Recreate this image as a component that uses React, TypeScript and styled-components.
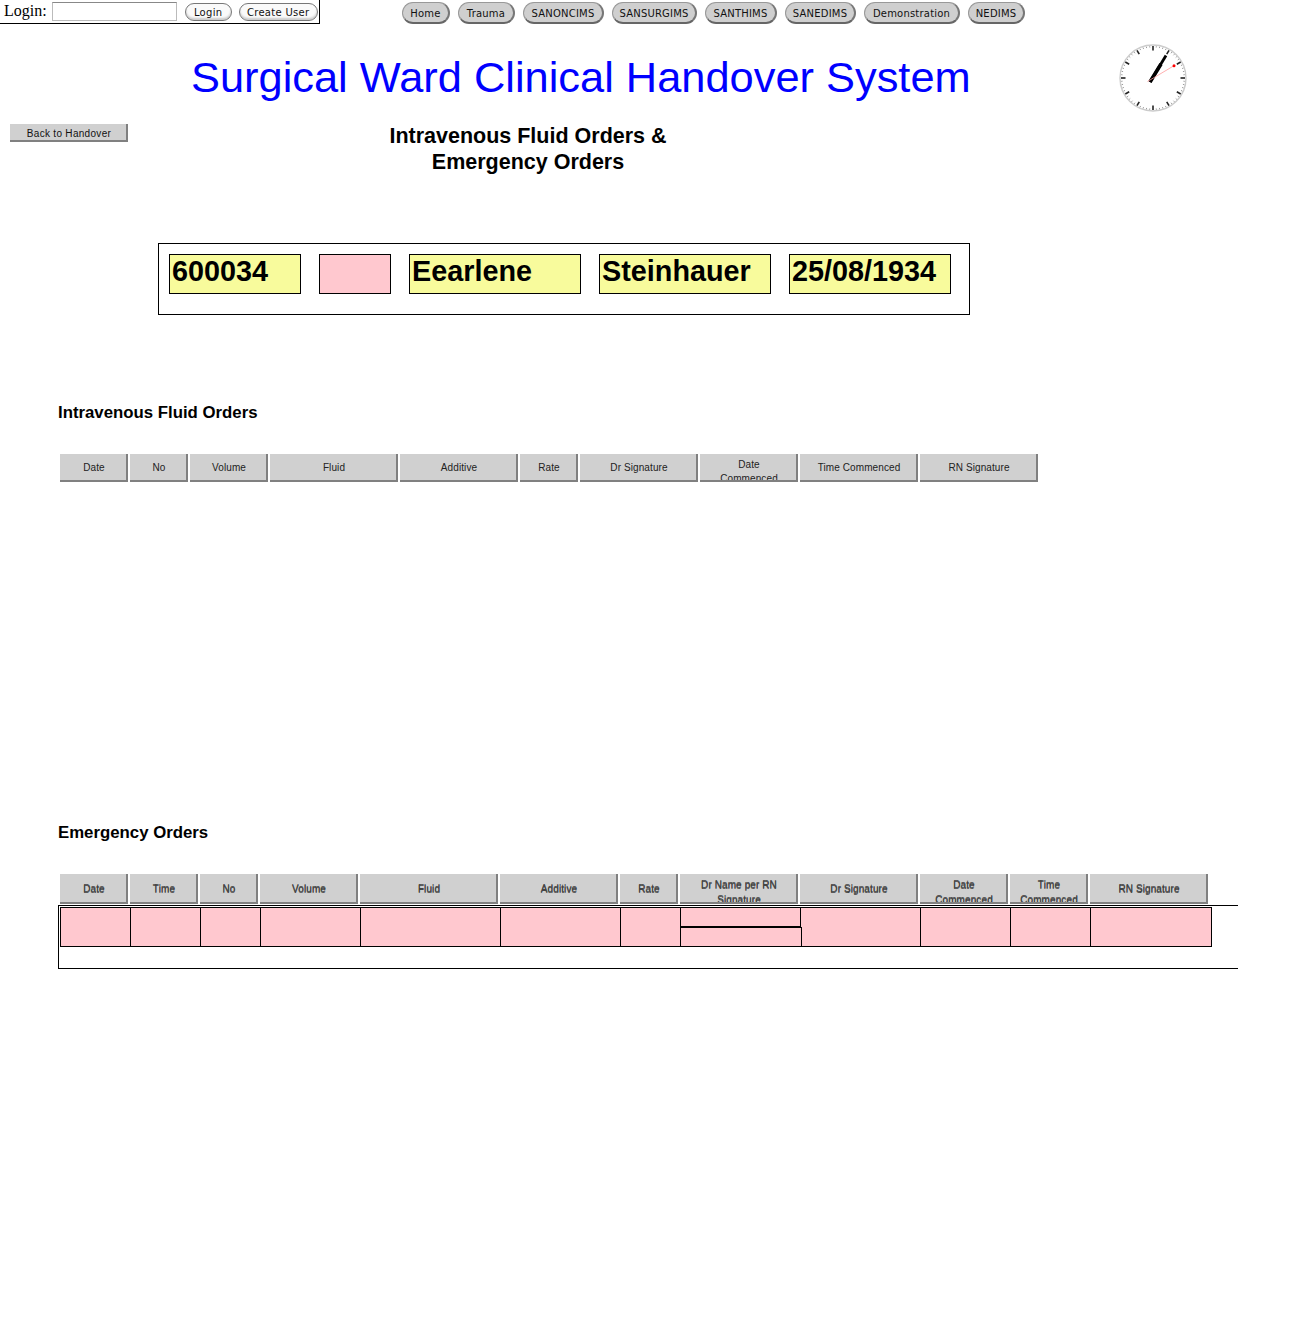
import styled, { createGlobalStyle } from "styled-components"

const GlobalStyle = createGlobalStyle`
  html, body {
    margin: 0;
    background: #fff;
    color: #000;
    font-family: "Liberation Sans", Arial, sans-serif;
  }
`

const Page = styled.div`
  width: 1308px;
  height: 1323px;
  overflow: hidden;
`

const TopBar = styled.div`
  display: flex;
  height: 24px;
`

const LoginBox = styled.form`
  box-sizing: border-box;
  display: flex;
  align-items: center;
  width: 320px;
  height: 24px;
  padding: 0 1px 1px 4px;
  border-right: 1px solid #000;
  border-bottom: 1px solid #000;
  font-family: "Liberation Serif", serif;
  font-size: 16px;
`

const LoginInput = styled.input`
  box-sizing: border-box;
  width: 125px;
  height: 19px;
  margin: 0 8px 0 5px;
  padding: 0;
  border: 1px solid #bbb;
  border-top-color: #888;
  background: #fff;
`

const PillButton = styled.button<{ $width: number }>`
  box-sizing: border-box;
  width: ${({ $width }) => $width}px;
  height: 18px;
  margin: 1px 7px 0 0;
  padding: 1px 0 0;
  border: 1px solid #777;
  border-radius: 9px;
  background: #fafafa;
  box-shadow: inset 0 -2px 2px #ccc;
  color: #111;
  font-family: "DejaVu Sans", sans-serif;
  font-size: 10px;
  letter-spacing: 0.3px;
  line-height: 15px;
  white-space: nowrap;

  &:last-child {
    margin-right: 0;
  }
`

const Nav = styled.nav`
  display: flex;
  gap: 8px;
  align-items: flex-start;
  margin: 2px 0 0 82px;
`

const NavButton = styled.button<{ $width: number }>`
  box-sizing: border-box;
  width: ${({ $width }) => $width}px;
  height: 22px;
  padding: 1px 0 0;
  border: 1px solid #999;
  border-bottom: 2px solid #666;
  border-right: 2px solid #777;
  border-radius: 11px;
  background: #cfcfcf;
  color: #111;
  font-family: "DejaVu Sans", sans-serif;
  font-size: 10px;
  letter-spacing: 0.2px;
  white-space: nowrap;
`

const TitleRow = styled.header`
  display: flex;
  align-items: center;
  height: 100px;
  padding: 0 121px 0 191px;
  box-sizing: border-box;
  justify-content: space-between;
`

const Title = styled.h1`
  margin: 6px 0 0;
  color: #0000ff;
  font-size: 43.4px;
  font-weight: 400;
  line-height: 50px;
  white-space: nowrap;
`

const ClockFace = styled.svg`
  display: block;
  width: 68px;
  height: 68px;
  margin-top: 7px;
`

const SubHeader = styled.div`
  display: flex;
  align-items: flex-start;
  height: 119px;
  padding-left: 10px;
`

const BackButton = styled.button`
  box-sizing: border-box;
  width: 118px;
  height: 18px;
  padding: 2px 0 0 2px;
  border: 0;
  border-right: 2px solid #808080;
  border-bottom: 2px solid #808080;
  background: #d0d0d0;
  color: #111;
  font-family: "Liberation Sans", sans-serif;
  font-size: 10px;
  letter-spacing: 0.3px;
`

const SubTitle = styled.h2`
  width: 300px;
  margin: -1px 0 0 250px;
  font-size: 21.5px;
  font-weight: 700;
  line-height: 26px;
  text-align: center;
`

const PatientBox = styled.section`
  box-sizing: border-box;
  display: flex;
  gap: 18px;
  width: 812px;
  height: 72px;
  margin-left: 158px;
  padding: 10px;
  border: 1px solid #000;
`

const PatientField = styled.div<{ $width: number; $blank?: boolean }>`
  box-sizing: border-box;
  width: ${({ $width }) => $width}px;
  height: 40px;
  padding-left: 2px;
  border: 1px solid #000;
  background: ${({ $blank }) => ($blank ? "#ffc8cf" : "#f8fb9c")};
  font-size: 28.8px;
  font-weight: 700;
  line-height: 32px;
`

const Section = styled.section<{ $top: number; $height?: number }>`
  margin: ${({ $top }) => $top}px 0 0 58px;
  height: ${({ $height }) => ($height ? `${$height}px` : "auto")};
`

const SectionTitle = styled.h3`
  margin: 0 0 30px;
  font-size: 16.8px;
  font-weight: 700;
  line-height: 22px;
`

const HeadRow = styled.div`
  display: flex;
  gap: 2px;
  padding-left: 2px;
`

const HeadCell = styled.div<{
  $width: number
  $height: number
  $wrapped?: boolean
  $echo?: boolean
}>`
  box-sizing: border-box;
  position: relative;
  display: flex;
  align-items: ${({ $wrapped }) => ($wrapped ? "flex-start" : "center")};
  justify-content: center;
  width: ${({ $width }) => $width}px;
  height: ${({ $height }) => $height}px;
  padding: ${({ $wrapped }) => ($wrapped ? "4px 8px 0 10px" : "2px 0 0 2px")};
  overflow: hidden;
  border-right: 2px solid #808080;
  border-bottom: 2px solid #808080;
  background: #d0d0d0;
  color: ${({ $echo }) => ($echo ? "#444" : "#222")};
  font-size: 10px;
  letter-spacing: 0.1px;
  line-height: ${({ $echo }) => ($echo ? 15 : 14)}px;
  text-align: center;

  span {
    position: relative;
  }

  span::after {
    display: ${({ $echo }) => ($echo ? "block" : "none")};
    position: absolute;
    top: -1px;
    left: 0;
    width: 100%;
    content: attr(data-echo);
  }
`

const OrdersClip = styled.div`
  width: 1180px;
  margin-top: 1px;
  overflow: hidden;
`

const OrdersBox = styled.div`
  box-sizing: border-box;
  width: 1240px;
  height: 64px;
  padding: 1px;
  border: 1px solid #000;
`

const OrderRow = styled.div`
  display: flex;
  width: 1152px;
  height: 40px;
  border-right: 1px solid #000;
  border-bottom: 1px solid #000;
  border-top: 1px solid #000;
  box-sizing: border-box;
  background: #ffc8cf;
`

const OrderCell = styled.div<{ $width: number }>`
  box-sizing: border-box;
  display: flex;
  flex-direction: column;
  width: ${({ $width }) => $width}px;
  border-left: 1px solid #000;
`

const OrderUpper = styled.div`
  flex: 1;
  border-bottom: 1px solid #000;
`

// the lower half runs one pixel past the cell, as the reference does
const OrderLower = styled.div`
  flex: 1;
  position: relative;
  margin-right: -2px;
  border-top: 1px solid #000;
  border-right: 1px solid #000;
  background: #ffc8cf;
`

const navItems = [
  { label: "Home", width: 48 },
  { label: "Trauma", width: 57 },
  { label: "SANONCIMS", width: 81 },
  { label: "SANSURGIMS", width: 85 },
  { label: "SANTHIMS", width: 72 },
  { label: "SANEDIMS", width: 71 },
  { label: "Demonstration", width: 96 },
  { label: "NEDIMS", width: 57 },
]

const patient = [
  { width: 132, value: "600034" },
  { width: 72, value: "" },
  { width: 172, value: "Eearlene" },
  { width: 172, value: "Steinhauer" },
  { width: 162, value: "25/08/1934" },
]

const fluidColumns = [
  { label: "Date", width: 68 },
  { label: "No", width: 58 },
  { label: "Volume", width: 78 },
  { label: "Fluid", width: 128 },
  { label: "Additive", width: 118 },
  { label: "Rate", width: 58 },
  { label: "Dr Signature", width: 118 },
  { label: "Date Commenced", width: 98, wrapped: true },
  { label: "Time Commenced", width: 118 },
  { label: "RN Signature", width: 118 },
]

const emergencyColumns = [
  { label: "Date", width: 68 },
  { label: "Time", width: 68 },
  { label: "No", width: 58 },
  { label: "Volume", width: 98 },
  { label: "Fluid", width: 138 },
  { label: "Additive", width: 118 },
  { label: "Rate", width: 58 },
  { label: "Dr Name per RN Signature", width: 118, wrapped: true },
  { label: "Dr Signature", width: 118 },
  { label: "Date Commenced", width: 88, wrapped: true },
  { label: "Time Commenced", width: 78, wrapped: true },
  { label: "RN Signature", width: 118 },
]

const orderCells = [70, 70, 60, 100, 140, 120, 60, 120, 120, 90, 80, 121]

const Clock = () => {
  const ticks = Array.from({ length: 60 }, (_, i) => i)
  return (
    <ClockFace viewBox="0 0 68 68" aria-label="Clock">
      <circle cx="34" cy="34" r="33" fill="#fff" stroke="#ccc" strokeWidth="1.4" />
      {ticks.map((i) => (
        <line
          key={i}
          x1="34"
          y1={2}
          x2="34"
          y2={i % 5 === 0 ? 6.5 : 3.4}
          stroke={i % 5 === 0 ? "#222" : "#666"}
          strokeWidth={i % 5 === 0 ? 1.6 : 0.6}
          transform={`rotate(${i * 6} 34 34)`}
        />
      ))}
      <line x1="31" y1="38" x2="47" y2="11.5" stroke="#000" strokeWidth="2.8" />
      <line x1="31" y1="38" x2="42" y2="20" stroke="#000" strokeWidth="3.6" />
      <line x1="28.5" y1="37.5" x2="55" y2="21.7" stroke="#ff9a9a" strokeWidth="0.8" />
      <circle cx="55" cy="21.7" r="1.5" fill="#f00" />
    </ClockFace>
  )
}

export default function App() {
  return (
    <Page>
      <GlobalStyle />
      <TopBar>
        <LoginBox>
          Login:
          <LoginInput type="text" />
          <PillButton type="button" $width={47}>
            Login
          </PillButton>
          <PillButton type="button" $width={79}>
            Create User
          </PillButton>
        </LoginBox>
        <Nav>
          {navItems.map((item) => (
            <NavButton key={item.label} type="button" $width={item.width}>
              {item.label}
            </NavButton>
          ))}
        </Nav>
      </TopBar>

      <TitleRow>
        <Title>Surgical Ward Clinical Handover System</Title>
        <Clock />
      </TitleRow>

      <SubHeader>
        <BackButton type="button">Back to Handover</BackButton>
        <SubTitle>
          Intravenous Fluid Orders &amp;
          <br />
          Emergency Orders
        </SubTitle>
      </SubHeader>

      <PatientBox>
        {patient.map((field, i) => (
          <PatientField key={i} $width={field.width} $blank={!field.value}>
            {field.value}
          </PatientField>
        ))}
      </PatientBox>

      <Section $top={87} $height={420}>
        <SectionTitle>Intravenous Fluid Orders</SectionTitle>
        <HeadRow>
          {fluidColumns.map((col) => (
            <HeadCell key={col.label} $width={col.width} $height={28} $wrapped={col.wrapped}>
              <span>{col.label}</span>
            </HeadCell>
          ))}
        </HeadRow>
      </Section>

      <Section $top={0}>
        <SectionTitle>Emergency Orders</SectionTitle>
        <HeadRow>
          {emergencyColumns.map((col) => (
            <HeadCell
              key={col.label}
              $width={col.width}
              $height={30}
              $wrapped={col.wrapped}
              $echo
            >
              <span data-echo={col.label}>{col.label}</span>
            </HeadCell>
          ))}
        </HeadRow>
        <OrdersClip>
          <OrdersBox>
            <OrderRow>
              {orderCells.map((width, i) => (
                <OrderCell key={i} $width={width}>
                  {i === 7 && (
                    <>
                      <OrderUpper />
                      <OrderLower />
                    </>
                  )}
                </OrderCell>
              ))}
            </OrderRow>
          </OrdersBox>
        </OrdersClip>
      </Section>
    </Page>
  )
}
